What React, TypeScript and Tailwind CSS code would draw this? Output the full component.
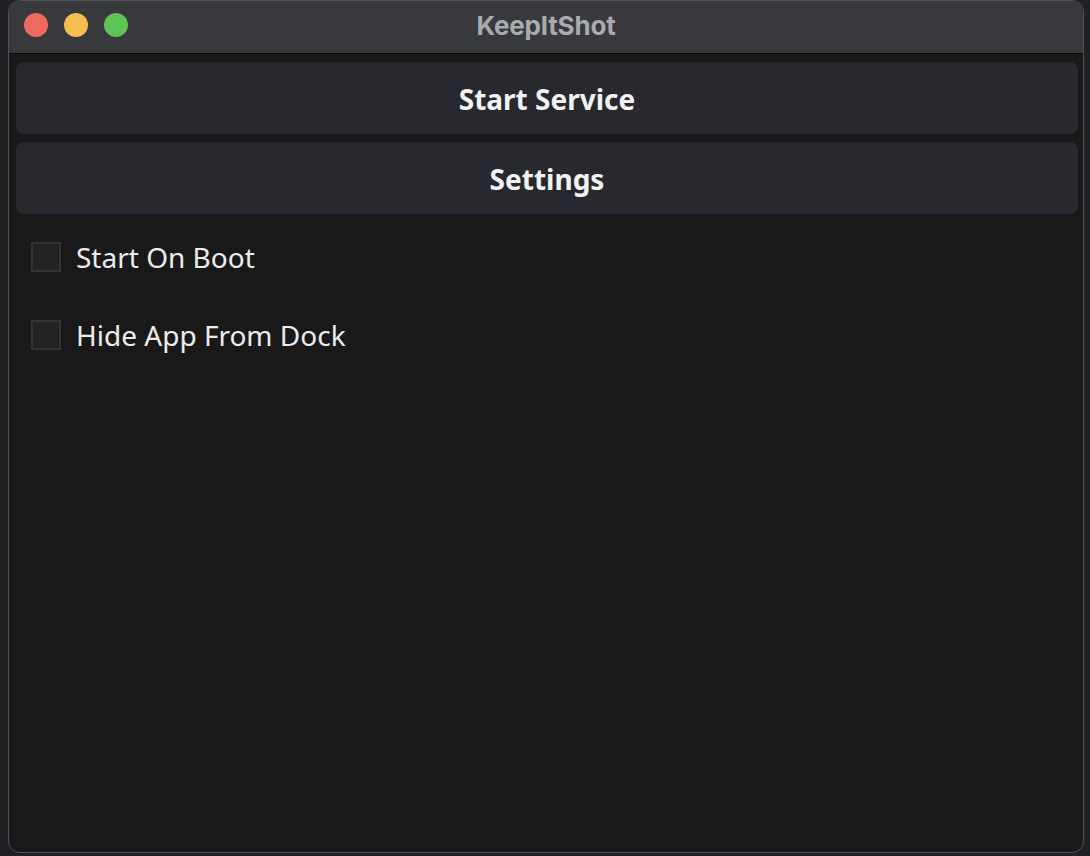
import React from "react";

const Checkbox = ({ label }: { label: string }) => (
  <label className="flex h-[30px] items-center gap-[15px]">
    <span className="block h-[30px] w-[30px] border-2 border-[#333335] bg-[#222224]"></span>
    <span className="text-[28px] leading-none text-[#ececec]">{label}</span>
  </label>
);

export default function App() {
  return (
    <div className="h-[856px] w-[1090px] overflow-hidden bg-[#1f2124] font-['Noto_Sans',sans-serif]">
      <div className="ml-[8px] flex h-[853px] w-[1076px] flex-col overflow-hidden rounded-[12px] border border-[#505153] bg-[#191919]">
        {/* title bar */}
        <div className="relative flex h-[53px] shrink-0 items-center justify-center border-b border-[#0c0c0c] bg-[#37393d]">
          <div className="absolute left-[15px] top-[12px] flex gap-[16px]">
            <span className="block h-[24px] w-[24px] rounded-full bg-[#ee6a5f]"></span>
            <span className="block h-[24px] w-[24px] rounded-full bg-[#f5be4f]"></span>
            <span className="block h-[24px] w-[24px] rounded-full bg-[#5ec454]"></span>
          </div>
          <span className="-mt-[4px] font-['Inter',sans-serif] text-[26px] font-bold tracking-[-0.2px] text-[#a9abae]">
            KeepItShot
          </span>
        </div>

        {/* content */}
        <div className="flex flex-col gap-[8px] pl-[7px] pr-[5px] pt-[8px]">
          <button className="flex h-[72px] w-full items-center justify-center rounded-[8px] bg-[#28292e] pt-[2px] text-[28px] font-bold text-[#f2f2f2]">
            Start Service
          </button>
          <button className="flex h-[72px] w-full items-center justify-center rounded-[8px] bg-[#28292e] pt-[2px] text-[28px] font-bold text-[#f2f2f2]">
            Settings
          </button>
        </div>

        <div className="flex flex-col gap-[48px] pl-[22px] pt-[28px]">
          <Checkbox label="Start On Boot" />
          <Checkbox label="Hide App From Dock" />
        </div>
      </div>
    </div>
  );
}
